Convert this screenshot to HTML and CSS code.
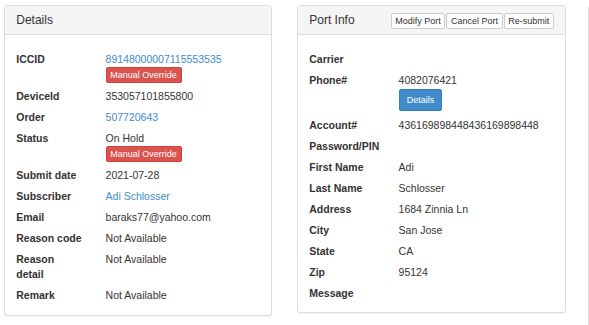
FILE: index.html
```html
<!DOCTYPE html>
<html lang="en">
<head>
<meta charset="utf-8">
<title>Order details</title>
<link rel="stylesheet" href="styles.css">
</head>
<body>
<div class="page">
  <section class="panel panel-details">
    <div class="panel-heading"><h3 class="panel-title">Details</h3></div>
    <div class="panel-body">
      <dl class="info info-narrow">
        <div class="row"><dt>ICCID</dt><dd><a href="#">89148000007115553535</a><span class="tag">Manual Override</span></dd></div>
        <div class="row"><dt>DeviceId</dt><dd>353057101855800</dd></div>
        <div class="row"><dt>Order</dt><dd><a href="#">507720643</a></dd></div>
        <div class="row"><dt>Status</dt><dd>On Hold<span class="tag">Manual Override</span></dd></div>
        <div class="row"><dt>Submit date</dt><dd>2021-07-28</dd></div>
        <div class="row"><dt>Subscriber</dt><dd><a href="#">Adi Schlosser</a></dd></div>
        <div class="row"><dt>Email</dt><dd>baraks77@yahoo.com</dd></div>
        <div class="row"><dt>Reason code</dt><dd>Not Available</dd></div>
        <div class="row"><dt>Reason detail</dt><dd>Not Available</dd></div>
        <div class="row"><dt>Remark</dt><dd>Not Available</dd></div>
      </dl>
    </div>
  </section>

  <section class="panel panel-port">
    <div class="panel-heading">
      <div class="actions">
        <button class="btn-xs">Modify Port</button>
        <button class="btn-xs">Cancel Port</button>
        <button class="btn-xs">Re-submit</button>
      </div>
      <h3 class="panel-title">Port Info</h3>
    </div>
    <div class="panel-body">
      <dl class="info">
        <div class="row"><dt>Carrier</dt><dd></dd></div>
        <div class="row"><dt>Phone#</dt><dd>4082076421<button class="btn-primary">Details</button></dd></div>
        <div class="row"><dt>Account#</dt><dd>436169898448436169898448</dd></div>
        <div class="row"><dt>Password/PIN</dt><dd></dd></div>
        <div class="row"><dt>First Name</dt><dd>Adi</dd></div>
        <div class="row"><dt>Last Name</dt><dd>Schlosser</dd></div>
        <div class="row"><dt>Address</dt><dd>1684 Zinnia Ln</dd></div>
        <div class="row"><dt>City</dt><dd>San Jose</dd></div>
        <div class="row"><dt>State</dt><dd>CA</dd></div>
        <div class="row"><dt>Zip</dt><dd>95124</dd></div>
        <div class="row"><dt>Message</dt><dd></dd></div>
      </dl>
    </div>
  </section>

  <section class="panel panel-extra">
    <div class="panel-heading"><h3 class="panel-title">&nbsp;</h3></div>
    <div class="panel-body"></div>
  </section>
</div>
</body>
</html>
```

FILE: styles.css
```css
html, body {
  margin: 0;
  padding: 0;
  overflow: hidden;
  background: #fff;
}

body {
  font-family: "Liberation Sans", Arial, sans-serif;
  font-size: 10.5px;
  line-height: 15px;
  color: #333;
}

.page {
  display: grid;
  grid-template-columns: 293px 291px 240px;
  align-items: start;
  padding: 5px 0 0 4px;
}

.panel {
  background: #fff;
  border: 1px solid #ddd;
  border-radius: 3px;
  box-shadow: 0 1px 1px rgba(0, 0, 0, 0.05);
}

.panel-details { width: 268px; box-sizing: border-box; }
.panel-port { width: 269px; box-sizing: border-box; }
.panel-extra { min-height: 400px; }

.panel-heading {
  background: #f5f5f5;
  border-bottom: 1px solid #ddd;
  border-radius: 2px 2px 0 0;
  padding: 7.5px 11.25px;
}

.panel-title {
  margin: 0;
  font-size: 12px;
  font-weight: normal;
  line-height: 13.2px;
  color: #333;
}

.panel-body {
  padding: 11.25px;
}

.actions {
  float: right;
  display: flex;
  gap: 1px;
  margin-top: -0.2px;
}

button {
  font-family: inherit;
  cursor: pointer;
}

.btn-xs {
  font-size: 9px;
  line-height: 12px;
  padding: 1px 3.6px;
  border: 1px solid #ccc;
  border-radius: 2px;
  background: #fff;
  color: #333;
}

.info {
  margin: 0;
}

.row {
  display: flex;
  margin-top: 6px;
}

.row dt {
  flex: none;
  width: 89.3px;
  font-weight: bold;
}

.info-narrow .row dt {
  width: 67px;
  margin-right: 22.3px;
}

.row dd {
  margin: 0;
  min-height: 15px;
  display: flex;
  flex-direction: column;
  align-items: flex-start;
}

.row a {
  color: #428bca;
  text-decoration: none;
}

.tag {
  display: block;
  height: 16px;
  box-sizing: border-box;
  font-size: 9px;
  line-height: 14px;
  padding: 0 3.75px;
  color: #fff;
  background: #d9534f;
  border: 1px solid #d43f3a;
  border-radius: 2px;
}

.btn-primary {
  height: 22px;
  box-sizing: border-box;
  font-size: 9px;
  line-height: 20px;
  padding: 0 7.2px;
  margin: 0.6px 0 0.6px;
  color: #fff;
  background: #428bca;
  border: 1px solid #357ebd;
  border-radius: 2px;
}
```
